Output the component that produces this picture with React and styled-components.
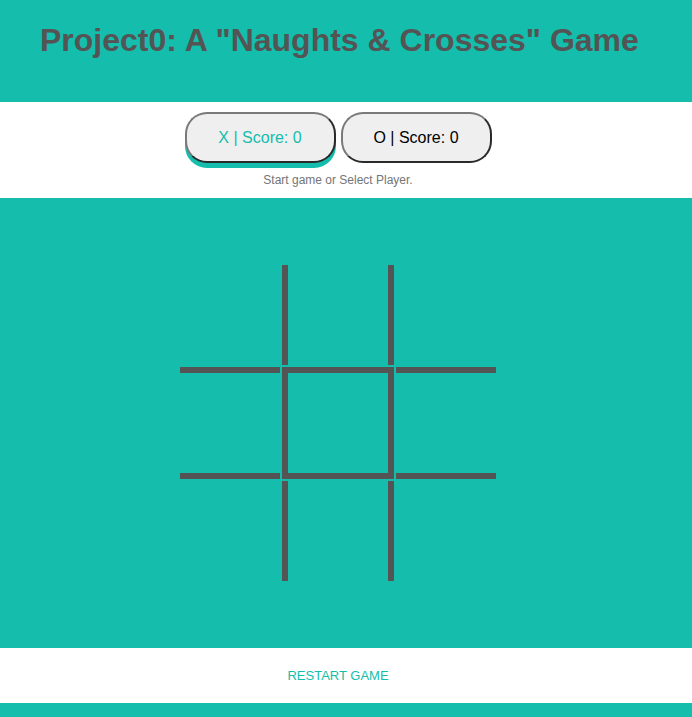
import React from "react";
import styled, { createGlobalStyle } from "styled-components";

const TEAL = "#14bdac";
const LINE = "#545454";

const GlobalStyle = createGlobalStyle`
  html, body {
    margin: 0;
    padding: 0;
    background: ${TEAL};
    font-family: "Liberation Sans", Arial, sans-serif;
  }
`;

const Header = styled.header`
  background: ${TEAL};
  padding: 22px 0 43px 40px;
`;

const Title = styled.h1`
  margin: 0;
  font-size: 32px;
  line-height: 37px;
  font-weight: bold;
  color: ${LINE};
`;

const Status = styled.section`
  background: #ffffff;
  padding: 10px 16px 11px 0;
  display: flex;
  flex-direction: column;
  align-items: center;
`;

const Players = styled.div`
  display: flex;
  gap: 5px;
`;

const PlayerButton = styled.button`
  box-sizing: border-box;
  width: 151px;
  height: 51px;
  border-radius: 22px;
  border: 2px solid;
  border-color: #7a7a7a #2a2a2a #2a2a2a #7a7a7a;
  background: #efefef;
  font-family: "Liberation Sans", Arial, sans-serif;
  font-size: 16px;
  color: ${(p) => (p.$active ? TEAL : "#000000")};
  box-shadow: ${(p) => (p.$active ? `0 5px 0 0 ${TEAL}` : "none")};
  padding: 0;
  cursor: pointer;
`;

const Hint = styled.p`
  margin: 10px 0 0;
  font-size: 12px;
  line-height: 14px;
  color: #757575;
`;

const BoardSection = styled.section`
  background: ${TEAL};
  padding: 67px 16px 67px 0;
  display: flex;
  justify-content: center;
`;

const Board = styled.div`
  display: grid;
  grid-template-columns: 100px 112px 100px;
  grid-template-rows: 100px 112px 100px;
  gap: 2px;
`;

const Cell = styled.div`
  box-sizing: border-box;
  border-style: solid;
  border-color: ${LINE};
  border-width: ${(p) =>
    `${p.$t ? 6 : 0}px ${p.$r ? 6 : 0}px ${p.$b ? 6 : 0}px ${p.$l ? 6 : 0}px`};
  cursor: pointer;
`;

const Footer = styled.footer`
  background: #ffffff;
  height: 55px;
  padding-right: 16px;
  display: flex;
  align-items: center;
  justify-content: center;
`;

const Restart = styled.button`
  border: none;
  background: transparent;
  padding: 0;
  font-family: "Liberation Sans", Arial, sans-serif;
  font-size: 13px;
  color: ${TEAL};
  cursor: pointer;
`;

const cells = [
  {},
  { l: 1, r: 1 },
  {},
  { t: 1, b: 1 },
  { t: 1, r: 1, b: 1, l: 1 },
  { t: 1, b: 1 },
  {},
  { l: 1, r: 1 },
  {},
];

export default function App() {
  return (
    <>
      <GlobalStyle />
      <Header>
        <Title>Project0: A "Naughts &amp; Crosses" Game</Title>
      </Header>
      <Status>
        <Players>
          <PlayerButton $active>X | Score: 0</PlayerButton>
          <PlayerButton>O | Score: 0</PlayerButton>
        </Players>
        <Hint>Start game or Select Player.</Hint>
      </Status>
      <BoardSection>
        <Board>
          {cells.map((c, i) => (
            <Cell key={i} $t={c.t} $r={c.r} $b={c.b} $l={c.l} />
          ))}
        </Board>
      </BoardSection>
      <Footer>
        <Restart>RESTART GAME</Restart>
      </Footer>
    </>
  );
}
